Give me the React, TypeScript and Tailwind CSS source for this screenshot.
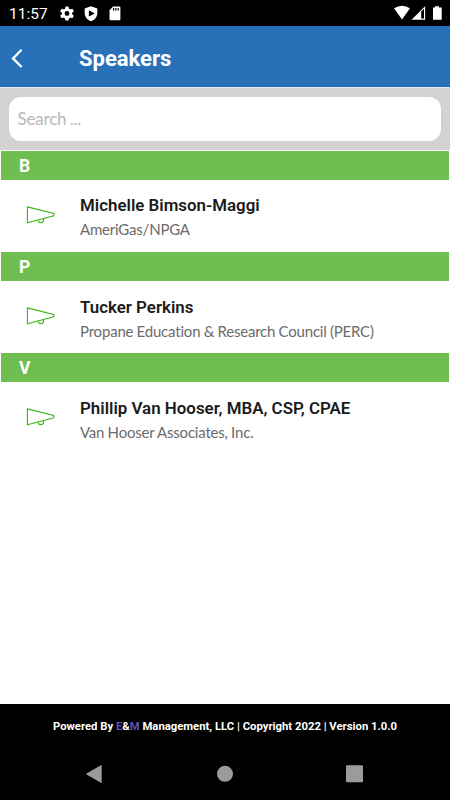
import React from "react";

type Speaker = { letter: string; name: string; company: string };

const speakers: Speaker[] = [
  { letter: "B", name: "Michelle Bimson-Maggi", company: "AmeriGas/NPGA" },
  { letter: "P", name: "Tucker Perkins", company: "Propane Education & Research Council (PERC)" },
  { letter: "V", name: "Phillip Van Hooser, MBA, CSP, CPAE", company: "Van Hooser Associates, Inc." },
];

function StatusBar() {
  return (
    <div className="flex h-[26px] shrink-0 items-center bg-black text-white">
      <span className="ml-[9px] mt-[3px] w-[50px] text-[15.5px] leading-none">11:57</span>
      <svg className="mt-px h-4 w-4" viewBox="0 0 16 16">
        <g transform="translate(8 7.5)">
          <circle r="3.8" fill="none" stroke="white" strokeWidth="2.8" />
          {[0, 60, 120, 180, 240, 300].map((a) => (
            <path key={a} d="M-2.1 -4 L-1.5 -7.1 H1.5 L2.1 -4 Z" fill="white" transform={`rotate(${a})`} />
          ))}
        </g>
      </svg>
      <svg className="ml-2 mt-px h-4 w-4" viewBox="0 0 16 16">
        <path d="M8 0.2 L14.3 2.5 V7 C14.3 11 11.5 14.3 8 15.2 C4.5 14.3 1.7 11 1.7 7 V2.5 Z" fill="white" />
        <path d="M5.9 4.2 L11.7 7.4 L5.9 10.6 Z" fill="black" />
      </svg>
      <svg className="ml-2 mt-px h-4 w-4" viewBox="0 0 16 16">
        <path d="M6.2 0.5 H12.2 Q13.4 0.5 13.4 1.7 V13.1 Q13.4 14.3 12.2 14.3 H3.7 Q2.5 14.3 2.5 13.1 V4.2 Z" fill="white" />
        <path d="M6.6 2V4.6M8.9 2V4.6M11.2 2V4.6" stroke="black" strokeWidth="1.2" />
      </svg>
      <svg className="ml-auto h-[26px] w-[60px]" viewBox="0 0 60 26">
        <path d="M4 8.3 Q12 3.3 20 8.3 L12 19.4 Z" fill="white" />
        <path d="M21.5 19.7 L35.1 6.2 V19.7 Z" fill="white" />
        <path d="M31.2 11.6 L34 8.8 V18.6 H31.2 Z" fill="black" />
        <path d="M45 6.2 H49 V7.6 H51.7 V19.8 H43 V7.6 H45 Z" fill="white" />
      </svg>
    </div>
  );
}

function Megaphone() {
  return (
    <svg className="ml-[25px] mt-[25.3px] h-5 w-[30px] shrink-0" viewBox="0 0 30 20" fill="none" stroke="#36b312" strokeWidth="1.1" strokeLinejoin="round">
      <path d="M1.4 1.9 V17.8 L27.9 10.8 V8.5 Z" />
      <path d="M12.1 15.2 Q12.4 17.7 15 17.7 Q17.5 17.7 17.7 13.9" />
    </svg>
  );
}

export default function App() {
  return (
    <div className="flex h-[800px] w-[450px] flex-col overflow-hidden bg-white font-['Roboto',sans-serif]">
      <StatusBar />
      <header className="flex h-[61px] shrink-0 items-center border-b border-[#146fc0] bg-[#2871b8] text-white">
        <svg className="ml-[10px] mt-[3px] h-6 w-6" viewBox="0 0 24 24" fill="none" stroke="white" strokeWidth="2.3">
          <path d="M11.6 3.8 L3 12.4 L11.6 21" />
        </svg>
        <h1 className="ml-[45px] mt-[5px] text-[22px] font-bold leading-none">Speakers</h1>
      </header>
      <div className="h-[64px] shrink-0 border-b border-t border-b-[#f7f7f7] border-t-[#e9e9e9] bg-[#d2d2d2] px-[9px] pt-[9px]">
        <div className="flex h-[44px] items-center rounded-[12px] bg-white pl-[8.5px] font-['Lato',sans-serif] text-[17px] tracking-[-0.2px] text-[#b8b8b8] [word-spacing:-0.8px]">
          <span>Search ...</span>
        </div>
      </div>
      <main className="grow bg-white">
        {speakers.map((s) => (
          <section key={s.letter} className="h-[101.1px] px-px pt-[0.2px]">
            <h2 className="h-[28.6px] bg-[#6ebe52] pl-[18px] text-[17.5px] font-bold leading-[30px] text-white">{s.letter}</h2>
            <div className="flex">
              <Megaphone />
              <div className="ml-[24px] pt-[15.65px]">
                <p className="whitespace-nowrap text-[16.9px] font-semibold leading-5 text-[#1b1b1b]">{s.name}</p>
                <p className="mt-[4px] whitespace-nowrap font-['Lato',sans-serif] text-[15px] leading-5 tracking-[-0.2px] text-[#6b6b6b] [word-spacing:-0.3px]">{s.company}</p>
              </div>
            </div>
          </section>
        ))}
      </main>
      <footer className="h-[96px] shrink-0 bg-black">
        <p className="pt-[16px] text-center text-[11.3px] font-bold leading-[14px] text-white">
          Powered By <span className="text-[#5a52b5]">E</span>&amp;<span className="text-[#5a52b5]">M</span> Management, LLC | Copyright 2022 | Version 1.0.0
        </p>
        <svg className="mt-[28px] h-7 w-[450px]" viewBox="0 0 450 28" fill="#9b9b9b">
          <path d="M101.7 3.3 V20.6 Q101.7 21.3 100.9 20.8 L86.5 12.4 Q86 12 86.5 11.6 L100.9 3.2 Q101.7 2.8 101.7 3.3Z" />
          <circle cx="225" cy="11.8" r="8" />
          <rect x="346" y="3.2" width="17" height="17" rx="1" />
        </svg>
      </footer>
    </div>
  );
}
